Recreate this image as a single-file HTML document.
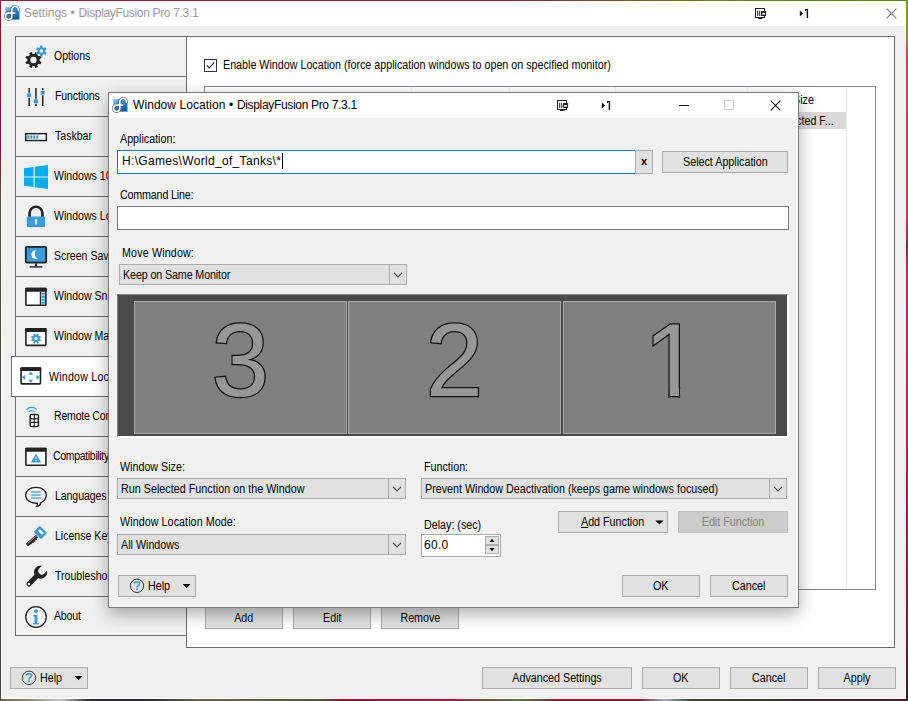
<!DOCTYPE html>
<html>
<head>
<meta charset="utf-8">
<title>Settings • DisplayFusion Pro 7.3.1</title>
<style>
*{box-sizing:border-box;margin:0;padding:0}
html,body{width:908px;height:701px;overflow:hidden}
body{position:relative;background:#7d2530;font-family:"Liberation Sans",sans-serif;font-size:11px;color:#000;letter-spacing:-0.12px}
div,span,svg,i,b,u{position:absolute}
u{position:static}
em{font-style:normal;position:static}
.desk{left:0;top:0;width:908px;height:701px;background:linear-gradient(90deg,#8a2434 0%,#8a2434 55%,#6b7a20 78%,#4f8a10 100%)}
.deskr{left:906px;top:0;width:2px;height:701px;background:linear-gradient(180deg,#58a80c 0,#6ea012 22px,#b07a30 40px,#cc4048 58px,#c63a4c 220px,#7a3038 245px,#c0304a 270px,#b0203c 480px,#7c1830 640px,#3a1420 701px)}
.deskb{left:0;top:699px;width:908px;height:2px;background:linear-gradient(90deg,#6b6a48 0,#8a8a70 30px,#c8c8c8 60px,#2a2a30 90px,#2a2a30 150px,#6a6a48 200px,#55553a 320px,#8c1f30 340px,#96203a 450px,#5a7a40 520px,#8c1f30 560px,#8c1f30 640px,#9ab0c0 665px,#3a4a30 690px,#3a2a28 800px,#4a1820 908px)}
.deskl{left:0;top:0;width:1px;height:701px;background:linear-gradient(180deg,#8a1c2e 0,#7a1a2a 150px,#5c4a3a 195px,#4c4c3a 300px,#45453a 701px)}
#main{left:1px;top:1px;width:905px;height:698px;background:#f0f0f0;border:1px solid #fff;border-top:0}
#mtitle{left:1px;top:1px;width:905px;height:25px;background:#fff}
.ttl{font-family:"Liberation Sans",sans-serif;font-size:12px;letter-spacing:-0.2px;white-space:nowrap;line-height:14px}
.btn{background:#e1e1e1;border:1px solid #adadad;text-align:center;white-space:nowrap;line-height:20px;height:22px}
.btn.dis{background:#cccccc;border-color:#bfbfbf;color:#838383}
.lbl{white-space:nowrap;line-height:13px;font-size:12px;letter-spacing:0;transform:scaleX(.893);transform-origin:0 50%}
.x{position:static;display:inline-block;font-style:normal;font-size:12px;letter-spacing:0;transform:scaleX(.893);transform-origin:50% 50%;white-space:nowrap}
.combo .x{transform-origin:0 50%}
#side{left:15px;top:36px;width:172px;height:600px;border:1px solid #6d6d6d;background:#f0f0f0}
.it{left:0;width:170px;height:41px;border-bottom:1px solid #6d6d6d}
.it span{top:14px;line-height:13px;white-space:nowrap;font-size:12px;letter-spacing:0;transform:scaleX(.88);transform-origin:0 50%}
.it .ic{left:0;top:0}
.it.sel{left:-5px;width:177px;background:#fff;border:1px solid #6d6d6d;border-right:0}
.it.sel .ic{left:0;top:-1px}
.it.sel span{top:14px;letter-spacing:0.3px}
#panel{left:186px;top:36px;width:709px;height:612px;border:1px solid #6d6d6d;background:#fff}
#list{left:204px;top:86px;width:672px;height:504px;border:1px solid #828790;background:#fff}
.cd{top:87px;width:1px;height:502px;background:#e8eef5}
#dlg{left:108px;top:92px;width:691px;height:516px;background:#f0f0f0;border:1px solid #777;box-shadow:inset 0 0 0 1px #fff,0 6px 16px 0 rgba(0,0,0,.32)}
#dtitle{left:109px;top:93px;width:689px;height:25px;background:#fff}
.combo{height:21px;background:#e1e1e1;border:1px solid #adadad;line-height:20px;padding-left:2.5px;white-space:nowrap;overflow:hidden}
.combo i{right:0;top:0;width:17px;height:19px;border-left:1px solid #adadad}
.tb{background:#fff;border:1px solid #7a7a7a}
.mon{background:#808080;border:1px solid #a9a9a9;top:301px;height:133px}
.num{font-family:"Liberation Sans",sans-serif;font-size:103px;line-height:105px;text-align:center;color:#979797;-webkit-text-stroke:2.5px #101010;paint-order:stroke fill;letter-spacing:0;width:100%;left:0;top:5.5px}
</style>
</head>
<body>
<div class="desk"></div><div class="deskr"></div><div class="deskb"></div><div class="deskl"></div>
<div id="main"></div>
<div id="mtitle"></div>
<svg style="left:0px;top:0px" width="24" height="24"><defs><linearGradient id="ga" x1="0" y1="0" x2="0.6" y2="1"><stop offset="0" stop-color="#9ad0f5"/><stop offset="0.45" stop-color="#2f8fd8"/><stop offset="1" stop-color="#0b5aa6"/></linearGradient></defs><rect x="5.3" y="7" width="14.4" height="12.6" fill="url(#ga)"/><rect x="18.9" y="10.5" width="1" height="9.2" fill="#b9c6d0" opacity=".8"/><path d="M20.2,6.5 H15 A3.3,3.3 0 0 1 18.3,10.5 H20.2Z" fill="#fff"/><path d="M18.3,10.5 A3.3,3.3 0 1 0 11.8,9.7 V16.3 A3.2,3.2 0 1 1 8.6,13.1 H14.8" fill="none" stroke="#50555b" stroke-width="2.8" stroke-linecap="round"/><path d="M18.3,10.5 A3.3,3.3 0 1 0 11.8,9.7 V16.3 A3.2,3.2 0 1 1 8.6,13.1 H14.8" fill="none" stroke="#fff" stroke-width="1.6" stroke-linecap="round"/></svg>
<div class="ttl" style="left:24px;top:6px;color:#999"><em style="letter-spacing:-0.05px">Settings</em><em style="letter-spacing:0.2px"> • </em><em style="letter-spacing:-0.33px">DisplayFusion Pro 7.3.1</em></div>
<svg style="left:755px;top:8px" width="14" height="13"><rect x="0.5" y="0.5" width="9" height="9" fill="#fff" stroke="#222" stroke-width="1"/><rect x="3" y="10" width="4.4" height="1" fill="#222"/><rect x="2.2" y="2.8" width="1" height="5.2" fill="#222"/><rect x="4.2" y="2.8" width="1" height="5.2" fill="#222"/><rect x="6" y="2.9" width="5.1" height="5.1" rx="0.5" fill="#222"/><rect x="7.2" y="5" width="2.9" height="1.6" fill="#fff"/></svg><svg style="left:799px;top:8px" width="12" height="12"><path d="M0.8,2.5 L4.2,5.45 L0.8,8.4Z" fill="#111"/><path d="M5.9,0.9 H9.1 V9.9 H7.7 V2.3 H6.9 V3.1 H5.9Z" fill="#111"/></svg><svg style="left:885.5px;top:7.5px" width="12" height="12"><path d="M0.7,0.7 L10.3,10.3 M10.3,0.7 L0.7,10.3" stroke="#777" stroke-width="1.05" fill="none"/></svg>
<div id="panel"></div>
<div id="side">
<div class="it" style="top:-1px"><svg width="60" height="40" class="ic"><path d="M23.62,24.97 L25.57,25.94 L24.58,28.34 L22.52,27.64 L21.14,29.02 L21.84,31.08 L19.44,32.07 L18.47,30.12 L16.53,30.12 L15.56,32.07 L13.16,31.08 L13.86,29.02 L12.48,27.64 L10.42,28.34 L9.43,25.94 L11.38,24.97 L11.38,23.03 L9.43,22.06 L10.42,19.66 L12.48,20.36 L13.86,18.98 L13.16,16.92 L15.56,15.93 L16.53,17.88 L18.47,17.88 L19.44,15.93 L21.84,16.92 L21.14,18.98 L22.52,20.36 L24.58,19.66 L25.57,22.06 L23.62,23.03Z M20.70,24.00 A3.2,3.2 0 1,0 14.30,24.00 A3.2,3.2 0 1,0 20.70,24.00Z" fill="#222" fill-rule="evenodd"/><path d="M29.21,15.83 L30.63,16.73 L29.46,18.75 L27.98,17.97 L26.54,18.80 L26.46,20.48 L24.14,20.48 L24.06,18.80 L22.62,17.97 L21.14,18.75 L19.97,16.73 L21.39,15.83 L21.39,14.17 L19.97,13.27 L21.14,11.25 L22.62,12.03 L24.06,11.20 L24.14,9.52 L26.46,9.52 L26.54,11.20 L27.98,12.03 L29.46,11.25 L30.63,13.27 L29.21,14.17Z M27.10,15.00 A1.8,1.8 0 1,0 23.50,15.00 A1.8,1.8 0 1,0 27.10,15.00Z" fill="#3b9ad9" fill-rule="evenodd"/></svg><span style="left:37.7px">Options</span></div>
<div class="it" style="top:39px"><svg width="60" height="40" class="ic"><rect x="12.399999999999999" y="12" width="1.5" height="18" fill="#222"/><rect x="19.200000000000003" y="12" width="1.5" height="18" fill="#222"/><rect x="26.0" y="12" width="1.5" height="18" fill="#222"/><rect x="10.8" y="17" width="4.6" height="4.6" fill="#3b9ad9" stroke="#f0f0f0" stroke-width="0.6"/><rect x="17.6" y="23" width="4.6" height="4.6" fill="#3b9ad9" stroke="#f0f0f0" stroke-width="0.6"/><rect x="24.4" y="14.400000000000006" width="4.6" height="4.6" fill="#3b9ad9" stroke="#f0f0f0" stroke-width="0.6"/></svg><span style="left:38.6px;letter-spacing:-0.15px">Functions</span></div>
<div class="it" style="top:79px"><svg width="60" height="40" class="ic"><rect x="9.7" y="17.69999999999999" width="20.6" height="6.8" fill="#fff" stroke="#222" stroke-width="1.5"/><rect x="11.3" y="19.400000000000006" width="2.1" height="3.4" fill="#3b9ad9"/><rect x="14.3" y="19.400000000000006" width="2.1" height="3.4" fill="#3b9ad9"/><rect x="17.299999999999997" y="19.400000000000006" width="2.1" height="3.4" fill="#3b9ad9"/><rect x="20.299999999999997" y="19.400000000000006" width="2.1" height="3.4" fill="#3b9ad9"/></svg><span style="left:38.6px">Taskbar</span></div>
<div class="it" style="top:119px"><svg width="60" height="40" class="ic"><path d="M8,12.199999999999989 L17.5,10.900000000000006 L17.5,20.400000000000006 L8,20.400000000000006Z" fill="#00adef"/><path d="M18.700000000000003,10.699999999999989 L32,8.900000000000006 L32,20.400000000000006 L18.700000000000003,20.400000000000006Z" fill="#00adef"/><path d="M8,21.599999999999994 L17.5,21.599999999999994 L17.5,31.099999999999994 L8,29.80000000000001Z" fill="#00adef"/><path d="M18.700000000000003,21.599999999999994 L32,21.599999999999994 L32,33.099999999999994 L18.700000000000003,31.30000000000001Z" fill="#00adef"/></svg><span style="left:38.3px">Windows 10</span></div>
<div class="it" style="top:159px"><svg width="60" height="40" class="ic"><path d="M13.600000000000001,21.5 V17.19999999999999 A6.4,6.4 0 0 1 26.4,17.19999999999999 V21.5" fill="none" stroke="#222" stroke-width="2.6"/><rect x="10.8" y="20.599999999999994" width="18.3" height="10.4" rx="1.2" fill="#3b9ad9"/><circle cx="20" cy="24.19999999999999" r="1.2" fill="#fff"/><rect x="19.200000000000003" y="24.19999999999999" width="1.6" height="4.2" fill="#fff"/></svg><span style="left:38.3px">Windows Logon</span></div>
<div class="it" style="top:199px"><svg width="60" height="40" class="ic"><rect x="9.8" y="10.900000000000006" width="20.4" height="15.8" rx="1.2" fill="#3b9ad9" stroke="#222" stroke-width="1.8"/><rect x="19" y="27.399999999999977" width="2" height="3" fill="#222"/><rect x="13.7" y="30.19999999999999" width="12.6" height="1.4" fill="#222"/><path d="M20.200000000000003,14 A4.6,4.6 0 1 0 22.200000000000003,22.600000000000023 A5.2,5.2 0 0 1 20.200000000000003,14Z" fill="#fff"/></svg><span style="left:38.3px">Screen Saver</span></div>
<div class="it" style="top:239px"><svg width="60" height="40" class="ic"><rect x="9.899999999999999" y="12.600000000000023" width="20" height="16.6" rx="0.8" fill="#fff" stroke="#222" stroke-width="1.6"/><rect x="9.100000000000001" y="11.800000000000011" width="21.6" height="4" rx="0.8" fill="#222"/><rect x="23.799999999999997" y="15.800000000000011" width="1.4" height="13" fill="#222"/><rect x="25.6" y="16.600000000000023" width="3.4" height="2.2" fill="#3b9ad9"/><rect x="25.6" y="19.600000000000023" width="3.4" height="2.2" fill="#3b9ad9"/><rect x="25.6" y="22.600000000000023" width="3.4" height="2.2" fill="#3b9ad9"/><rect x="25.6" y="25.600000000000023" width="3.4" height="2.2" fill="#3b9ad9"/></svg><span style="left:38.3px">Window Snapping</span></div>
<div class="it" style="top:279px"><svg width="60" height="40" class="ic"><rect x="9.899999999999999" y="12.800000000000011" width="20" height="16.6" rx="0.8" fill="#fff" stroke="#222" stroke-width="1.6"/><rect x="9.100000000000001" y="12" width="21.6" height="4" rx="0.8" fill="#222"/><path d="M23.75,23.19 L25.06,23.81 L24.43,25.32 L23.07,24.83 L22.23,25.67 L22.72,27.03 L21.21,27.66 L20.59,26.35 L19.41,26.35 L18.79,27.66 L17.28,27.03 L17.77,25.67 L16.93,24.83 L15.57,25.32 L14.94,23.81 L16.25,23.19 L16.25,22.01 L14.94,21.39 L15.57,19.88 L16.93,20.37 L17.77,19.53 L17.28,18.17 L18.79,17.54 L19.41,18.85 L20.59,18.85 L21.21,17.54 L22.72,18.17 L22.23,19.53 L23.07,20.37 L24.43,19.88 L25.06,21.39 L23.75,22.01Z M21.70,22.60 A1.7,1.7 0 1,0 18.30,22.60 A1.7,1.7 0 1,0 21.70,22.60Z" fill="#3b9ad9" fill-rule="evenodd"/></svg><span style="left:38.3px">Window Management</span></div>
<div class="it sel" style="top:319px"><svg width="60" height="40" class="ic"><rect x="9.100000000000001" y="12.100000000000023" width="19.4" height="15.8" rx="0.8" fill="#fff" stroke="#222" stroke-width="1.6"/><rect x="8.3" y="11.300000000000011" width="21" height="3.6" rx="0.8" fill="#222"/><path d="M18.8,15.600000000000023 l2.5,3.2 h-5z M18.8,27 l2.5,-3.2 h-5z M9.600000000000001,21.30000000000001 l3.6,-2.4 v4.8z M28,21.30000000000001 l-3.6,-2.4 v4.8z" fill="#3b9ad9"/></svg><span style="left:37.3px">Window Location</span></div>
<div class="it" style="top:359px"><svg width="60" height="40" class="ic"><rect x="14.2" y="18.600000000000023" width="8.2" height="12" rx="1.4" fill="#fff" stroke="#222" stroke-width="1.5"/><rect x="15.600000000000001" y="20.399999999999977" width="2.2" height="2.4" fill="#fff" stroke="#222" stroke-width="0.0"/><rect x="18.800000000000004" y="20.399999999999977" width="2.2" height="2.4" fill="#fff" stroke="#222" stroke-width="0.0"/><rect x="15.600000000000001" y="23.799999999999955" width="2.2" height="2.4" fill="#fff" stroke="#222" stroke-width="0.0"/><rect x="18.800000000000004" y="23.799999999999955" width="2.2" height="2.4" fill="#fff" stroke="#222" stroke-width="0.0"/><rect x="15.600000000000001" y="27.19999999999999" width="2.2" height="2.4" fill="#fff" stroke="#222" stroke-width="0.0"/><rect x="18.800000000000004" y="27.19999999999999" width="2.2" height="2.4" fill="#fff" stroke="#222" stroke-width="0.0"/><path d="M18.299999999999997,19 V30.399999999999977 M14.399999999999999,22.899999999999977 H22.200000000000003 M14.399999999999999,26.399999999999977 H22.200000000000003" stroke="#222" stroke-width="1.1" fill="none"/><path d="M10.399999999999999,13.600000000000023 A7.2,7.2 0 0 1 20.799999999999997,13.600000000000023" stroke="#3b9ad9" stroke-width="1.3" fill="none"/><path d="M12.600000000000001,16 A4.4,4.4 0 0 1 18.6,16" stroke="#3b9ad9" stroke-width="1.3" fill="none"/></svg><span style="left:38.2px;letter-spacing:-0.25px">Remote Control</span></div>
<div class="it" style="top:399px"><svg width="60" height="40" class="ic"><rect x="9.899999999999999" y="12.600000000000023" width="20" height="16.6" rx="0.8" fill="#fff" stroke="#222" stroke-width="1.6"/><rect x="9.100000000000001" y="11.800000000000011" width="21.6" height="4" rx="0.8" fill="#222"/><path d="M20,17.600000000000023 L25.200000000000003,26.399999999999977 H14.8Z" fill="#3b9ad9"/><rect x="19.5" y="20.600000000000023" width="1" height="2.8" fill="#fff"/><rect x="19.5" y="24.19999999999999" width="1" height="1" fill="#fff"/></svg><span style="left:37.2px;letter-spacing:-0.4px">Compatibility</span></div>
<div class="it" style="top:439px"><svg width="60" height="40" class="ic"><path d="M20,11.399999999999977 C26.5,11.399999999999977 30.4,15 30.4,19 C30.4,23 27,26 24.799999999999997,26.600000000000023 C24.6,28.600000000000023 22.6,30 20.799999999999997,30.19999999999999 C21.6,29.19999999999999 21.6,28 21.200000000000003,27.19999999999999 C14,27.600000000000023 9.600000000000001,23.600000000000023 9.600000000000001,19.19999999999999 C9.600000000000001,15 13.5,11.399999999999977 20,11.399999999999977Z" fill="none" stroke="#222" stroke-width="1.3"/><rect x="15.2" y="15.399999999999977" width="9.6" height="1.2" fill="#3b9ad9"/><rect x="15.2" y="18.399999999999977" width="9.6" height="1.2" fill="#3b9ad9"/><rect x="15.2" y="21.399999999999977" width="9.6" height="1.2" fill="#3b9ad9"/></svg><span style="left:38.6px;letter-spacing:-0.1px">Languages</span></div>
<div class="it" style="top:479px"><svg width="60" height="40" class="ic"><g transform="translate(20.6,20.299999999999955) rotate(139)"><rect x="-0.5" y="-2.0" width="13.6" height="3.5" rx="1.1" fill="#222"/><path d="M1.2,-1.9 l1.1,-1.3 l1.1,1.3 l1,-1.3 l1.1,1.3 l1,-1.3 l1.1,1.3 l1,-1.3 l1.1,1.3Z" fill="#222"/><rect x="0" y="0.1" width="11.6" height="0.7" fill="#b5b5b5"/></g><g transform="translate(24.4,16.5) rotate(45)"><rect x="-5.2" y="-4.3" width="10.4" height="8.6" rx="1.1" fill="#3b9ad9"/><rect x="-2.9" y="-2.1" width="5.8" height="2.7" rx="0.6" fill="#fff"/></g></svg><span style="left:38.6px">License Key</span></div>
<div class="it" style="top:519px"><svg width="60" height="40" class="ic"><path d="M12.899999999999999,28 L22.200000000000003,18.399999999999977" stroke="#222" stroke-width="5" stroke-linecap="round" fill="none"/><circle cx="24.6" cy="16.200000000000045" r="6.6" fill="#222"/><g transform="translate(24.6,16.200000000000045) rotate(-45)"><circle cx="1.7" cy="0" r="3.5" fill="#f0f0f0"/><rect x="1.7" y="-3.5" width="8" height="7" fill="#f0f0f0"/></g><circle cx="12.899999999999999" cy="28" r="1.25" fill="#f0f0f0"/></svg><span style="left:38.6px">Troubleshooting</span></div>
<div class="it" style="top:559px;border-bottom:0"><svg width="60" height="40" class="ic"><circle cx="20" cy="21" r="10.3" fill="none" stroke="#222" stroke-width="1.3"/><circle cx="20" cy="15.200000000000045" r="1.9" fill="#3b9ad9"/><path d="M17.4,19 H21.4 V27 H23 V28.600000000000023 H17 V27 H18.6 V20.600000000000023 H17.4Z" fill="#3b9ad9"/></svg><span style="left:38.3px;letter-spacing:-0.2px">About</span></div>
</div>
<!-- panel content -->
<div class="tb" style="left:204px;top:59px;width:13px;height:13px;border-color:#333"></div>
<svg style="left:204px;top:59px" width="13" height="13"><path d="M2.8,6.4 L5.3,9 L10.2,3.4" fill="none" stroke="#222" stroke-width="1.1"/></svg>
<div class="lbl" style="left:223px;top:59px">Enable Window Location (force application windows to open on specified monitor)</div>
<div id="list"></div>
<div class="cd" style="left:411px"></div><div class="cd" style="left:509px"></div><div class="cd" style="left:615px"></div><div class="cd" style="left:747px"></div><div class="cd" style="left:846px"></div>
<div style="left:747px;top:112px;width:99px;height:17px;background:#d9d9d9"></div>
<div class="lbl" style="left:752px;top:94px">Window Size</div>
<div class="lbl" style="left:752px;top:115px">Run Selected F...</div>
<div class="btn" style="left:205px;top:607px;width:78px"><em class="x">Add</em></div>
<div class="btn" style="left:293px;top:607px;width:78px"><em class="x">Edit</em></div>
<div class="btn" style="left:381px;top:607px;width:78px"><em class="x">Remove</em></div>
<!-- bottom buttons -->
<div class="btn" style="left:10px;top:667px;width:78px"></div>
<svg style="left:10px;top:667px" width="78" height="22"><circle cx="19" cy="10.8" r="6.7" fill="none" stroke="#222" stroke-width="0.9"/><path d="M16.3,8.6 C16.3,6.2 21.6,6.2 21.6,8.7 C21.6,10.4 19,10.4 19,12.4" fill="none" stroke="#3b9ad9" stroke-width="1.5"/><rect x="18.2" y="13.4" width="1.6" height="1.6" fill="#3b9ad9"/><path d="M64.6,9 H72.4 L68.5,13.2Z" fill="#000"/></svg><div class="lbl" style="left:40px;top:671.5px">Help</div>
<div class="btn" style="left:482px;top:667px;width:150px"><em class="x">Advanced Settings</em></div>
<div class="btn" style="left:642px;top:667px;width:78px"><em class="x">OK</em></div>
<div class="btn" style="left:730px;top:667px;width:78px"><em class="x">Cancel</em></div>
<div class="btn" style="left:818px;top:667px;width:78px"><em class="x">Apply</em></div>

<!-- dialog -->
<div id="dlg"></div>
<div id="dtitle"></div>
<svg style="left:108px;top:92.4px" width="24" height="24"><defs><linearGradient id="gb" x1="0" y1="0" x2="0.6" y2="1"><stop offset="0" stop-color="#9ad0f5"/><stop offset="0.45" stop-color="#2f8fd8"/><stop offset="1" stop-color="#0b5aa6"/></linearGradient></defs><rect x="5.3" y="7" width="14.4" height="12.6" fill="url(#gb)"/><rect x="18.9" y="10.5" width="1" height="9.2" fill="#b9c6d0" opacity=".8"/><path d="M20.2,6.5 H15 A3.3,3.3 0 0 1 18.3,10.5 H20.2Z" fill="#fff"/><path d="M18.3,10.5 A3.3,3.3 0 1 0 11.8,9.7 V16.3 A3.2,3.2 0 1 1 8.6,13.1 H14.8" fill="none" stroke="#50555b" stroke-width="2.8" stroke-linecap="round"/><path d="M18.3,10.5 A3.3,3.3 0 1 0 11.8,9.7 V16.3 A3.2,3.2 0 1 1 8.6,13.1 H14.8" fill="none" stroke="#fff" stroke-width="1.6" stroke-linecap="round"/></svg>
<div class="ttl" style="left:133px;top:98px;color:#000"><em style="letter-spacing:0.07px">Window Location</em><em style="letter-spacing:0.2px"> • </em><em style="letter-spacing:-0.33px">DisplayFusion Pro 7.3.1</em></div>
<svg style="left:557px;top:100px" width="14" height="13"><rect x="0.5" y="0.5" width="9" height="9" fill="#fff" stroke="#222" stroke-width="1"/><rect x="3" y="10" width="4.4" height="1" fill="#222"/><rect x="2.2" y="2.8" width="1" height="5.2" fill="#222"/><rect x="4.2" y="2.8" width="1" height="5.2" fill="#222"/><rect x="6" y="2.9" width="5.1" height="5.1" rx="0.5" fill="#222"/><rect x="7.2" y="5" width="2.9" height="1.6" fill="#fff"/></svg><svg style="left:601px;top:100px" width="12" height="12"><path d="M0.8,2.5 L4.2,5.45 L0.8,8.4Z" fill="#111"/><path d="M5.9,0.9 H9.1 V9.9 H7.7 V2.3 H6.9 V3.1 H5.9Z" fill="#111"/></svg><div style="left:679px;top:105px;width:10px;height:1px;background:#111"></div><div style="left:724px;top:100px;width:10px;height:10px;border:1px solid #cccccc"></div><svg style="left:769.5px;top:99.5px" width="12" height="12"><path d="M0.7,0.7 L10.3,10.3 M10.3,0.7 L0.7,10.3" stroke="#111" stroke-width="1.05" fill="none"/></svg>
<div class="lbl" style="left:120px;top:133px">Application:</div>
<div class="tb" style="left:117px;top:150px;width:519px;height:24px;border-color:#0078d7"></div>
<div class="ttl" style="left:122px;top:154px;letter-spacing:0.32px">H:\Games\World_of_Tanks\*</div>
<div style="left:282px;top:153px;width:1px;height:16px;background:#000"></div>
<div class="btn" style="left:635px;top:150px;width:18px;height:24px;line-height:21px;font-weight:bold;font-size:11px">x</div>
<div class="btn" style="left:662px;top:151px;width:126px"><em class="x">Select Application</em></div>
<div class="lbl" style="left:120px;top:189px;letter-spacing:-0.2px">Command Line:</div>
<div class="tb" style="left:117px;top:206px;width:672px;height:24px"></div>
<div class="lbl" style="left:122px;top:247px;letter-spacing:0.16px">Move Window:</div>
<div class="combo" style="left:119px;top:264px;width:288px"><em class="x" style="letter-spacing:-0.13px">Keep on Same Monitor</em><i><svg style="left:3px;top:7px" width="11" height="7"><path d="M1,0.9 L5,4.9 L9,0.9" fill="none" stroke="#404040" stroke-width="1.1"/></svg></i></div>
<!-- monitor view -->
<div style="left:117px;top:294px;width:672px;height:144px;background:#4a4a4a;border-style:solid;border-color:#858585 #fff #fff #858585;border-width:1px 2px 2px 1px"></div>
<div class="mon" style="left:134px;width:213px"><div class="num">3</div></div>
<div class="mon" style="left:348px;width:213px"><div class="num">2</div></div>
<div class="mon" style="left:563px;width:213px"><div class="num" style="left:3px;clip-path:polygon(0 0,211px 0,211px 79.6px,113.2px 79.6px,113.2px 105px,101.2px 105px,101.2px 79.6px,0 79.6px)">1</div><div style="left:104.3px;top:85px;width:1.5px;height:10.5px;background:#3a3a3a"></div><div style="left:114.8px;top:85px;width:1.3px;height:10.5px;background:#1a1a1a"></div></div>
<div class="lbl" style="left:120px;top:461px">Window Size:</div>
<div class="combo" style="left:117px;top:478px;width:289px"><em class="x" style="letter-spacing:0.04px">Run Selected Function on the Window</em><i><svg style="left:3px;top:7px" width="11" height="7"><path d="M1,0.9 L5,4.9 L9,0.9" fill="none" stroke="#404040" stroke-width="1.1"/></svg></i></div>
<div class="lbl" style="left:424px;top:461px">Function:</div>
<div class="combo" style="left:421px;top:478px;width:366px"><em class="x">Prevent Window Deactivation (keeps game windows focused)</em><i><svg style="left:3px;top:7px" width="11" height="7"><path d="M1,0.9 L5,4.9 L9,0.9" fill="none" stroke="#404040" stroke-width="1.1"/></svg></i></div>
<div class="lbl" style="left:120px;top:516px;letter-spacing:0.08px">Window Location Mode:</div>
<div class="combo" style="left:117px;top:534px;width:289px"><em class="x">All Windows</em><i><svg style="left:3px;top:7px" width="11" height="7"><path d="M1,0.9 L5,4.9 L9,0.9" fill="none" stroke="#404040" stroke-width="1.1"/></svg></i></div>
<div class="lbl" style="left:424px;top:519px">Delay: (sec)</div>
<div class="tb" style="left:421px;top:534px;width:80px;height:23px;border-color:#ababab"></div><div style="left:485px;top:536px;width:14px;height:9px;background:#e1e1e1;border:1px solid #adadad"></div><div style="left:485px;top:545px;width:14px;height:9px;background:#e1e1e1;border:1px solid #adadad"></div><svg style="left:485px;top:536px" width="14" height="18"><path d="M4.2,6 H9.8 L7,3Z M4.2,12 H9.8 L7,15Z" fill="#000"/></svg>
<div class="ttl" style="left:424px;top:538px;letter-spacing:0.3px">60.0</div>
<div class="btn" style="left:558px;top:511px;width:110px;text-align:left;padding-left:22px"><em class="x" style="transform-origin:0 50%"><u>A</u>dd Function</em><svg style="left:96px;top:8px" width="10" height="6"><path d="M0.4,0.4 H8.6 L4.5,4.4Z" fill="#000"/></svg></div>
<div class="btn dis" style="left:678px;top:511px;width:110px"><em class="x">Edit Function</em></div>
<div class="btn" style="left:118px;top:575px;width:78px"></div>
<svg style="left:118px;top:575px" width="78" height="22"><circle cx="19" cy="10.8" r="6.7" fill="none" stroke="#222" stroke-width="0.9"/><path d="M16.3,8.6 C16.3,6.2 21.6,6.2 21.6,8.7 C21.6,10.4 19,10.4 19,12.4" fill="none" stroke="#3b9ad9" stroke-width="1.5"/><rect x="18.2" y="13.4" width="1.6" height="1.6" fill="#3b9ad9"/><path d="M64.6,9 H72.4 L68.5,13.2Z" fill="#000"/></svg><div class="lbl" style="left:148px;top:579.5px">Help</div>
<div class="btn" style="left:622px;top:575px;width:78px"><em class="x">OK</em></div>
<div class="btn" style="left:710px;top:575px;width:78px"><em class="x">Cancel</em></div>
</body>
</html>
